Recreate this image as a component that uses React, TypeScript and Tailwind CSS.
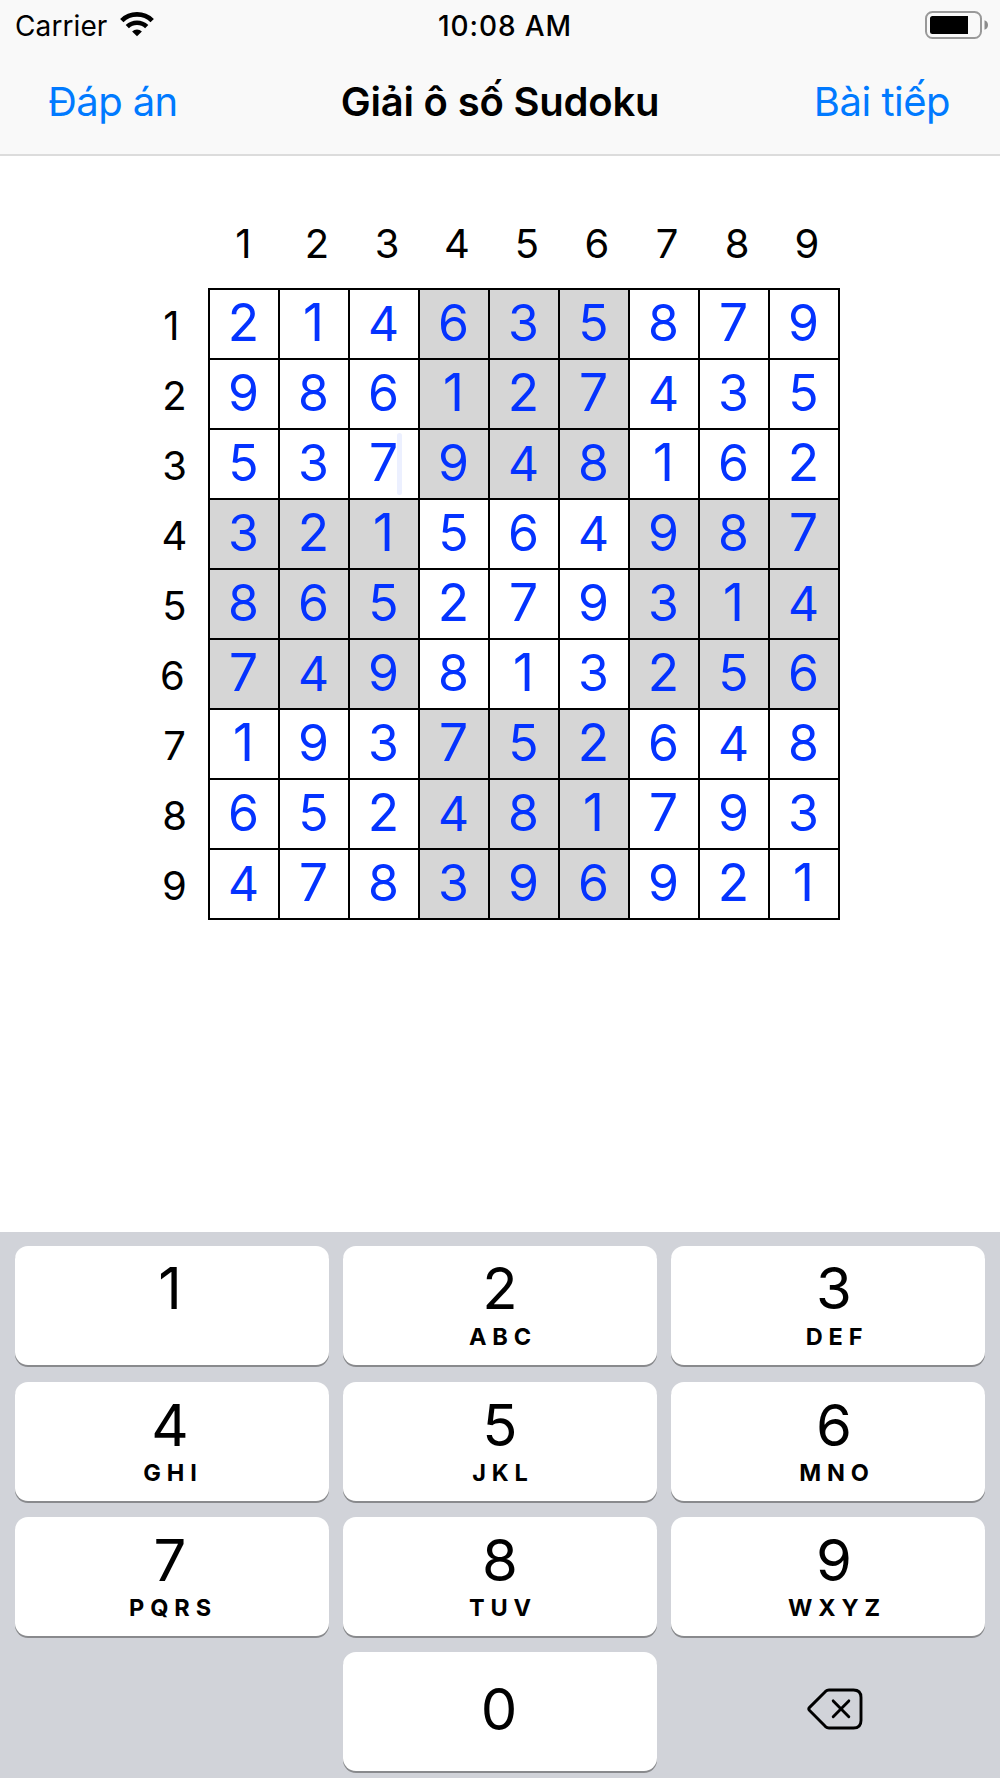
import React from "react";
import clsx from "clsx";

const board = [
  "214635879",
  "986127435",
  "537948162",
  "321564987",
  "865279314",
  "749813256",
  "193752648",
  "652481793",
  "478396921",
];

const labels = ["1", "2", "3", "4", "5", "6", "7", "8", "9"];

const keys = [
  { digit: "1", letters: "" },
  { digit: "2", letters: "ABC" },
  { digit: "3", letters: "DEF" },
  { digit: "4", letters: "GHI" },
  { digit: "5", letters: "JKL" },
  { digit: "6", letters: "MNO" },
  { digit: "7", letters: "PQRS" },
  { digit: "8", letters: "TUV" },
  { digit: "9", letters: "WXYZ" },
];

const WifiIcon: React.FC = () => (
  <svg width="34" height="25" viewBox="0 0 34 25" className="ml-[13px] -mt-[2px]">
    <path d="M1.8 8.6 A21.8 21.8 0 0 1 32.2 8.6" fill="none" stroke="#000" strokeWidth="4.8" />
    <path d="M7.3 14.6 A14 14 0 0 1 26.7 14.6" fill="none" stroke="#000" strokeWidth="4.6" />
    <path d="M17 24.3 L12.1 19.4 A7 7 0 0 1 21.9 19.4 Z" />
  </svg>
);

const BatteryIcon: React.FC = () => (
  <svg width="64" height="28" viewBox="0 0 64 28" className="-mt-[2px]">
    <rect x="1" y="1" width="55" height="26" rx="6.5" fill="none" stroke="#999" strokeWidth="2" />
    <rect x="5" y="5" width="38" height="18" rx="2.5" />
    <rect x="39" y="5" width="4" height="18" />
    <path d="M59.5 9.2 Q63 10.5 63 14 Q63 17.5 59.5 18.8 Z" fill="#8c8c8c" />
  </svg>
);

const BackspaceIcon: React.FC = () => (
  <svg
    width="56"
    height="42"
    viewBox="0 0 56 42"
    fill="none"
    stroke="#000"
    strokeWidth="2.9"
    strokeLinecap="round"
    strokeLinejoin="round"
  >
    <path d="M22 2 H46.5 Q54 2 54 9.5 V32.5 Q54 40 46.5 40 H22 Q20 40 18.5 38.6 L2.6 22.6 Q1 21 2.6 19.4 L18.5 3.4 Q20 2 22 2 Z" />
    <path d="M26.2 12.9 L41.8 28.7 M41.8 12.9 L26.2 28.7" />
  </svg>
);

const Header: React.FC = () => (
  <header className="h-[156px] bg-[#f9f9f9] border-b-2 border-[#dcdcdc]">
    <div className="h-[51px] grid grid-cols-3 items-center">
      <div className="flex items-center pl-[15px] text-[28px] leading-none">
        <span className="tracking-[0.1px]">Carrier</span>
        <WifiIcon />
      </div>
      <div className="text-center text-[28px] leading-none font-medium tracking-[0.9px] pl-[10px]">10:08 AM</div>
      <div className="flex justify-end pr-[11px]">
        <BatteryIcon />
      </div>
    </div>
    <div className="h-[101px] grid grid-cols-[1fr_auto_1fr] items-center text-[40px] leading-none">
      <button className="text-left pl-[48px] text-[#007aff] tracking-[-0.6px]">Đáp án</button>
      <h1 className="font-semibold tracking-[-0.2px]">Giải ô số Sudoku</h1>
      <button className="text-right pr-[50px] text-[#007aff] tracking-[-0.5px]">Bài tiếp</button>
    </div>
  </header>
);

const digitSize = (digit: string) => {
  if ("127".includes(digit)) return "text-[51.5px]";
  if (digit === "4") return "text-[48px]";
  return "text-[50px]";
};

const Cell: React.FC<{ digit: string; shaded: boolean; active: boolean }> = ({ digit, shaded, active }) => (
  <div
    className={clsx(
      "relative border-r-2 border-b-2 border-black pr-px text-center text-[50px] leading-[67px] text-[#0433ff]",
      shaded && "bg-[#d6d6d6]"
    )}
  >
    <span className={clsx("leading-none", digitSize(digit))}>{digit}</span>
    {active && <span className="absolute left-[47px] top-[3px] w-[5px] h-[62px] rounded-full bg-[#ecf0ff]" />}
  </div>
);

const Board: React.FC = () => (
  <div className="pt-[64px] pl-[148px]">
    <div className="ml-[64px] h-[46px] w-[630px] grid grid-cols-9 text-center text-[40px] leading-[48px]">
      {labels.map((label) => (
        <span key={label} className={clsx(label === "1" && "-ml-[7px]")}>
          {label}
        </span>
      ))}
    </div>
    <div className="flex mt-[22px]">
      <div className="w-[60px] pt-[3px] text-[40px] leading-[70px]">
        {labels.map((label) => (
          <div
            key={label}
            className={clsx("h-[70px] w-[53px] text-center", label === "1" && "-ml-[3px]", label === "6" && "-ml-[2px]")}
          >
            {label}
          </div>
        ))}
      </div>
      <div className="w-[632px] h-[632px] border-t-2 border-l-2 border-black grid grid-cols-9 grid-rows-9">
        {board.map((row, r) =>
          row.split("").map((digit, c) => (
            <Cell
              key={`${r}-${c}`}
              digit={digit}
              shaded={(Math.floor(r / 3) + Math.floor(c / 3)) % 2 === 1}
              active={r === 2 && c === 2}
            />
          ))
        )}
      </div>
    </div>
  </div>
);

const keyClass = "h-[119px] rounded-[13px] bg-white shadow-[0_2px_0_#898a8d] flex flex-col items-center";

const Keypad: React.FC = () => (
  <div className="h-[546px] bg-[#d1d3d9] pt-[14.3px] px-[15px] grid grid-cols-3 gap-x-[14px] auto-rows-[119px] gap-y-[16.3px] content-start">
    {keys.map(({ digit, letters }, i) => (
      <button
        key={digit}
        className={clsx(keyClass, i % 3 === 0 && "pr-[4px]", i % 3 === 2 && "pl-[12px]", i < 3 ? "pt-[12.5px]" : "pt-[14px]")}
      >
        <span className="text-[58px] leading-[58px]">{digit}</span>
        {letters && (
          <span className={clsx("text-[23.5px] leading-[24px] font-bold tracking-[5.9px] pl-[6px]", i < 3 ? "mt-[8px]" : "mt-[7px]")}>
            {letters}
          </span>
        )}
      </button>
    ))}
    <div />
    <button className={clsx(keyClass, "pt-[27.5px] pr-[2px] text-[58px] leading-[58px]")}>0</button>
    <button className="pl-[13px] pt-[36px] flex justify-center items-start">
      <BackspaceIcon />
    </button>
  </div>
);

const App: React.FC = () => {
  return (
    <div className="w-[1000px] h-[1778px] overflow-hidden flex flex-col bg-white text-black font-['Inter',sans-serif]">
      <Header />
      <main className="flex-1">
        <Board />
      </main>
      <Keypad />
    </div>
  );
};

export default App;
